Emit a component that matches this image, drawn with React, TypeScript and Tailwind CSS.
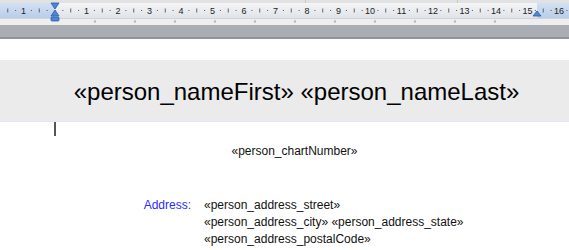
import React from "react";

const CM = 31.5;
const ORIGIN = 55;
const RIGHT = 537;

function Ruler() {
  const marks: React.ReactNode[] = [];
  for (let i = -2; i < 17; i++) {
    const x0 = ORIGIN + i * CM;
    [0.25, 0.75].forEach((f) => {
      const x = x0 + f * CM;
      if (x > 0 && x < 569)
        marks.push(<rect key={`d${i}${f}`} x={x - 0.5} y={10} width={1} height={1} fill="#555" />);
    });
    const h = x0 + 0.5 * CM;
    if (h > 0 && h < 569)
      marks.push(<rect key={`h${i}`} x={h - 0.5} y={8.5} width={1} height={4} fill="#666" />);
  }
  const labels: React.ReactNode[] = [];
  for (let n = 1; n <= 16; n++) {
    labels.push(
      <text key={n} x={ORIGIN + n * CM} y={14} fontSize={9} textAnchor="middle" fill="#222" fontFamily="Liberation Sans, Arial, sans-serif">
        {n}
      </text>
    );
  }
  const tabs: React.ReactNode[] = [];
  for (let t = 1; t < 12; t++) {
    const x = ORIGIN + t * 40;
    if (x < RIGHT) tabs.push(<rect key={`t${t}`} x={x - 0.5} y={20.5} width={1} height={2} fill="#777" />);
  }
  return (
    <svg width={569} height={25} className="block">
      <defs>
        <linearGradient id="rb" x1="0" y1="0" x2="0" y2="1">
          <stop offset="0" stopColor="#f4f5f7" />
          <stop offset="1" stopColor="#e0e3e8" />
        </linearGradient>
        <linearGradient id="rm" x1="0" y1="0" x2="0" y2="1">
          <stop offset="0" stopColor="#d3e0f2" />
          <stop offset="1" stopColor="#b9cde9" />
        </linearGradient>
      </defs>
      <rect x={0} y={0} width={569} height={25} fill="#eeeeee" />
      <rect x={0} y={0} width={569} height={3} fill="#e2e2e2" />
      <rect x={305} y={0} width={1} height={3} fill="#c8c8c8" />
      <rect x={457} y={0} width={1} height={3} fill="#c8c8c8" />
      <rect x={0} y={3} width={569} height={15} fill="url(#rb)" />
      <rect x={0} y={3} width={ORIGIN} height={15} fill="url(#rm)" />
      <rect x={RIGHT} y={3} width={569 - RIGHT} height={15} fill="url(#rm)" />
      <rect x={0} y={18} width={569} height={1} fill="#d0d3d8" />
      {marks}
      <text x={ORIGIN - CM} y={14} fontSize={9} textAnchor="middle" fill="#222" fontFamily="Liberation Sans, Arial, sans-serif">
        1
      </text>
      {labels}
      {tabs}
      {/* left indent marker */}
      <path d="M51 3 L59 3 L55 9 Z" fill="#4f86d6" stroke="#2a5aa6" strokeWidth={0.8} />
      <path d="M55 10 L59 16 L51 16 Z" fill="#4f86d6" stroke="#2a5aa6" strokeWidth={0.8} />
      <rect x={51} y={17} width={8} height={4} rx={1} fill="#4f86d6" stroke="#2a5aa6" strokeWidth={0.8} />
      {/* right indent marker */}
      <path d="M537 11 L541 16 L533 16 Z" fill="#4f86d6" stroke="#2a5aa6" strokeWidth={0.8} />
    </svg>
  );
}

export default function App() {
  return (
    <div className="w-[569px] h-[250px] overflow-hidden bg-white font-['Liberation_Sans',Arial,sans-serif] text-black">
      <Ruler />
      <div className="h-[14px] bg-[#aaaeb4] border-b-2 border-[#8f939a]" />

      <div className="mt-[21px] h-[62px] bg-[#ebebeb] border-b border-[#dfe7f6] flex items-center justify-center pl-[24px]">
        <h1 className="text-[24px] leading-none pt-[2px]">«person_nameFirst» «person_nameLast»</h1>
      </div>

      <div className="ml-[54px] w-[2px] h-[14px] bg-[#555]" />

      <div className="mt-[8px] pl-[20px] text-center text-[12px] leading-[14px] text-[#111]">«person_chartNumber»</div>

      <div className="mt-[39px] flex text-[12px] leading-[17px] text-[#111]">
        <div className="w-[191px] text-right text-[#2b2bff]">Address:</div>
        <div className="ml-[13px] flex flex-col">
          <span>«person_address_street»</span>
          <span>«person_address_city» «person_address_state»</span>
          <span>«person_address_postalCode»</span>
        </div>
      </div>
    </div>
  );
}
